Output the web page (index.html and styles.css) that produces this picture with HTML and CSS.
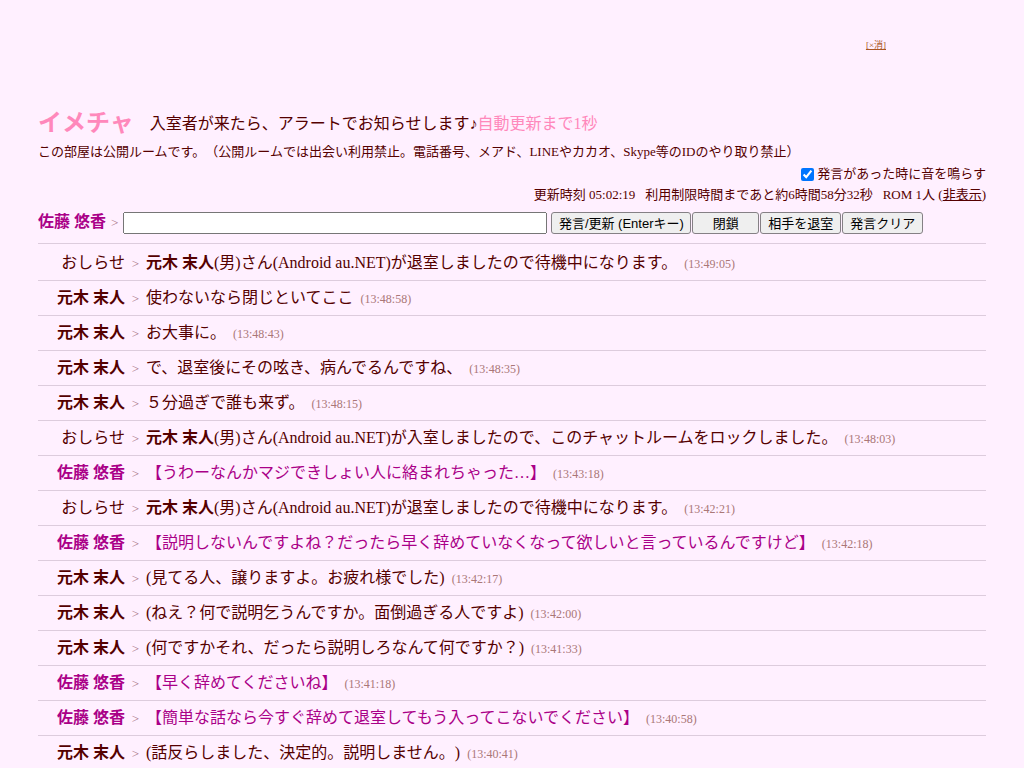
FILE: index.html
```html
<!DOCTYPE html>
<html lang="ja">
<head>
<meta charset="utf-8">
<title>イメチャ</title>
<link rel="stylesheet" href="styles.css">
</head>
<body>
<div class="ad"><a href="#">[×消]</a></div>
<header class="head"><h1 class="logo">イメチャ</h1><p class="lead">入室者が来たら、アラートでお知らせします♪<span class="timer">自動更新まで1秒</span></p></header>
<p class="note">この部屋は公開ルームです。（公開ルームでは出会い利用禁止。電話番号、メアド、LINEやカカオ、Skype等のIDのやり取り禁止）</p>
<div class="sound"><input type="checkbox" id="sound" checked><label for="sound">発言があった時に音を鳴らす</label></div>
<div class="status"><span>更新時刻 05:02:19</span><span>利用制限時間まであと約6時間58分32秒</span><span>ROM 1人 (<a href="#">非表示</a>)</span></div>
<form class="say"><label for="msg" class="me">佐藤 悠香</label><span class="gt">&gt;</span><input type="text" id="msg" class="box"><button type="button" class="send">発言/更新 (Enterキー)</button><button type="button" class="close">閉鎖</button><button type="button" class="act">相手を退室</button><button type="button" class="act">発言クリア</button></form>
<main class="log">
<div class="row info"><span class="who">おしらせ</span><span class="gt">&gt;</span><p class="text"><b>元木 末人</b>(男)さん(Android au.NET)が退室しましたので待機中になります。<time>(13:49:05)</time></p></div>
<div class="row"><b class="who">元木 末人</b><span class="gt">&gt;</span><p class="text">使わないなら閉じといてここ<time>(13:48:58)</time></p></div>
<div class="row"><b class="who">元木 末人</b><span class="gt">&gt;</span><p class="text">お大事に。<time>(13:48:43)</time></p></div>
<div class="row"><b class="who">元木 末人</b><span class="gt">&gt;</span><p class="text">で、退室後にその呟き、病んでるんですね、<time>(13:48:35)</time></p></div>
<div class="row"><b class="who">元木 末人</b><span class="gt">&gt;</span><p class="text">５分過ぎで誰も来ず。<time>(13:48:15)</time></p></div>
<div class="row info"><span class="who">おしらせ</span><span class="gt">&gt;</span><p class="text"><b>元木 末人</b>(男)さん(Android au.NET)が入室しましたので、このチャットルームをロックしました。<time>(13:48:03)</time></p></div>
<div class="row mine"><b class="who">佐藤 悠香</b><span class="gt">&gt;</span><p class="text">【うわーなんかマジできしょい人に絡まれちゃった…】<time>(13:43:18)</time></p></div>
<div class="row info"><span class="who">おしらせ</span><span class="gt">&gt;</span><p class="text"><b>元木 末人</b>(男)さん(Android au.NET)が退室しましたので待機中になります。<time>(13:42:21)</time></p></div>
<div class="row mine"><b class="who">佐藤 悠香</b><span class="gt">&gt;</span><p class="text">【説明しないんですよね？だったら早く辞めていなくなって欲しいと言っているんですけど】<time>(13:42:18)</time></p></div>
<div class="row"><b class="who">元木 末人</b><span class="gt">&gt;</span><p class="text">(見てる人、譲りますよ。お疲れ様でした)<time>(13:42:17)</time></p></div>
<div class="row"><b class="who">元木 末人</b><span class="gt">&gt;</span><p class="text">(ねえ？何で説明乞うんですか。面倒過ぎる人ですよ)<time>(13:42:00)</time></p></div>
<div class="row"><b class="who">元木 末人</b><span class="gt">&gt;</span><p class="text">(何ですかそれ、だったら説明しろなんて何ですか？)<time>(13:41:33)</time></p></div>
<div class="row mine"><b class="who">佐藤 悠香</b><span class="gt">&gt;</span><p class="text">【早く辞めてくださいね】<time>(13:41:18)</time></p></div>
<div class="row mine"><b class="who">佐藤 悠香</b><span class="gt">&gt;</span><p class="text">【簡単な話なら今すぐ辞めて退室してもう入ってこないでください】<time>(13:40:58)</time></p></div>
<div class="row"><b class="who">元木 末人</b><span class="gt">&gt;</span><p class="text">(話反らしました、決定的。説明しません。)<time>(13:40:41)</time></p></div>
</main>
</body>
</html>
```
FILE: styles.css
```css
* { box-sizing: border-box; }
html { overflow: hidden; }
body { margin: 0; padding: 36px 38px 0; background: #fff0ff; color: #550000; font-family: "Liberation Serif", "Noto Sans CJK JP", serif; font-size: 16px; text-spacing-trim: space-all; }
p, h1 { margin: 0; }
a { color: inherit; }
.ad { height: 72px; padding-right: 100px; text-align: right; font-size: 9px; line-height: 18px; color: #aa5522; }
.head { display: flex; align-items: center; gap: 16px; height: 30px; }
.logo { font-family: "Noto Sans CJK JP", sans-serif; font-size: 24px; color: #ff88bb; line-height: 26px; padding-bottom: 4px; }
.lead { line-height: 28px; padding-top: 2px; }
.timer { color: #ff88bb; }
.note { font-size: 13px; line-height: 28px; }
.sound { display: flex; justify-content: flex-end; align-items: center; font-size: 13px; line-height: 16px; height: 16px; }
.sound input { width: 13px; height: 13px; margin: 0 3px 0 0; }
.status { display: flex; justify-content: flex-end; gap: 10px; font-size: 13px; line-height: 26px; }
.say { display: flex; align-items: center; height: 30px; }
.me { font-weight: bold; color: #aa0088; line-height: 24px; padding-bottom: 2px; }
.gt { color: #aa7788; font-size: 13px; }
.say .gt { margin: 0 5px; }
.box { flex: 0 1 424px; min-width: 0; height: 22px; margin-right: 4px; }
button { flex: none; height: 22px; padding: 0 6px 2px; border: 1px solid #858085; border-radius: 3px; background: #efefef; color: #000; font: 13px "Liberation Sans", "Noto Sans CJK JP", sans-serif; }
.send { width: 140px; margin-right: 1px; }
.close { width: 67px; }
.act { width: 81px; margin-left: 1px; }
.log { margin-top: 5px; }
.row { display: flex; align-items: baseline; height: 35px; border-top: 1px solid #ddccdd; line-height: 34px; }
.row:first-child { height: 37px; line-height: 38px; }
.who { flex: none; width: 87px; text-align: right; }
.row .gt { width: 21px; text-align: center; flex: none; }
.mine { color: #aa0088; }
time { margin-left: 7px; font-size: 12px; color: #aa7777; }
```
